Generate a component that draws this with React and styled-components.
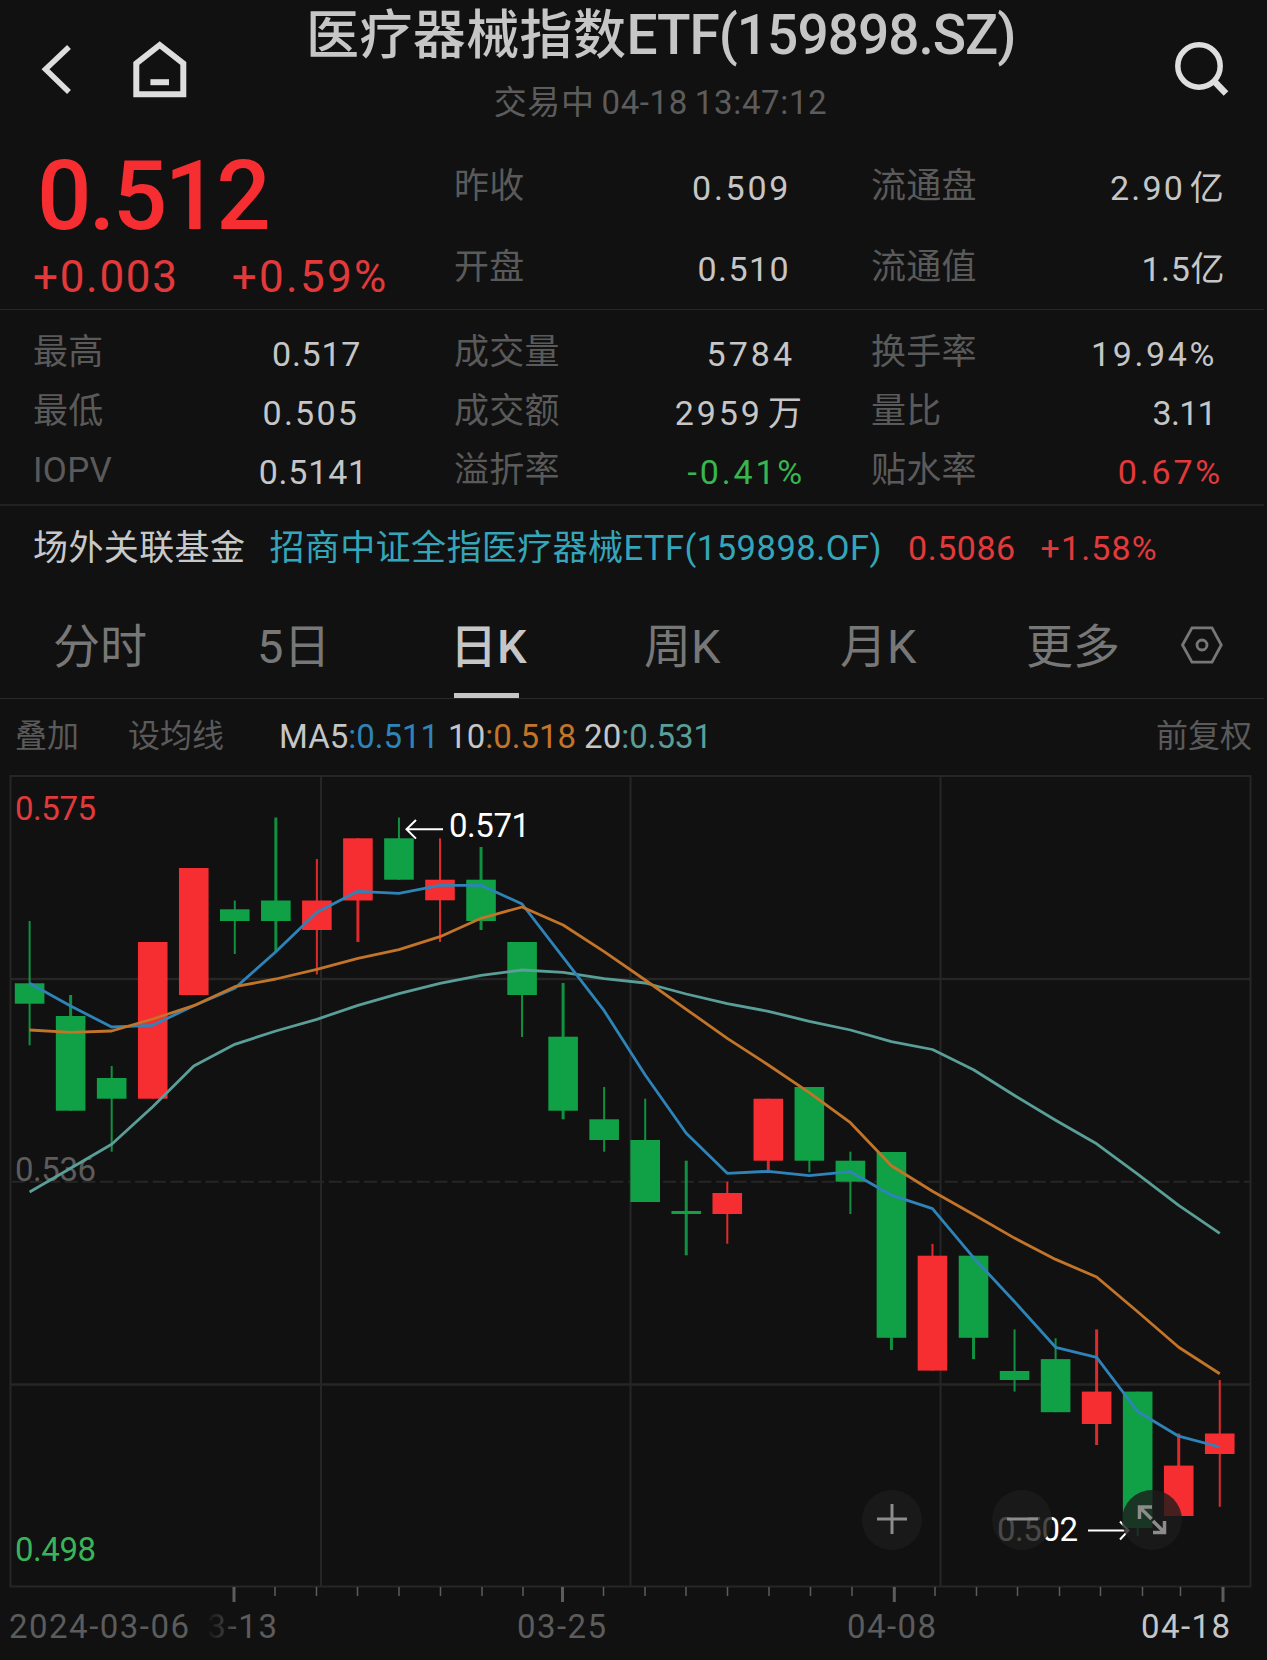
import styled, { createGlobalStyle, css } from 'styled-components';

const GlobalStyle = createGlobalStyle`
  * {
    box-sizing: border-box;
  }

  body {
    margin: 0;
    background: #111111;
  }
`;

const FONT = 'Roboto, "Noto Sans CJK SC", sans-serif';

const RED = '#f62d31';
const GREEN = '#10a046';

const Page = styled.main`
  width: 1267px;
  height: 1660px;
  overflow: hidden;
  padding-right: 3px;
  background: #111111;
  color: #c8c8c8;
  font-family: ${FONT};
  line-height: 1.2;
  white-space: nowrap;
`;

const Header = styled.header`
  display: grid;
  grid-template-columns: 306px 706px 1fr;
  height: 133px;
`;

const HeaderIcons = styled.div`
  display: flex;
  align-items: flex-start;
  gap: 59px;
  padding: 39px 0 0 39px;

  svg {
    display: block;
  }
`;

const SearchBox = styled.div`
  padding: 38px 0 0 160px;
`;

const TitleBox = styled.div`
  display: flex;
  flex-direction: column;
  align-items: center;
`;

const Title = styled.h1`
  align-self: flex-start;
  margin: 0;
  font-size: 53px;
  font-weight: 500;
  line-height: 71px;
  letter-spacing: 0.4px;
  color: #c6c6c6;

  span {
    font-size: 55px;
    letter-spacing: -1px;
  }
`;

const Status = styled.p`
  margin: 0 0 0 3px;
  font-size: 33px;
  line-height: 62px;
  color: #5c5c5c;
  letter-spacing: 0.65px;
  word-spacing: -2px;
`;

const Quote = styled.section`
  display: grid;
  grid-template-columns: 454px 417px 354px;
  height: 177px;
  border-bottom: 1px solid #262626;
`;

const Price = styled.p`
  margin: 0;
  padding-left: 37px;
  font-size: 96px;
  font-weight: 500;
  line-height: 126px;
  letter-spacing: -2.8px;
  color: ${RED};
`;

const Change = styled.p`
  display: flex;
  gap: 53px;
  margin: 0;
  padding-left: 33px;
  font-size: 44px;
  line-height: 37px;
  color: #e23a3b;
  letter-spacing: 1.7px;

  span:last-child {
    letter-spacing: 2.3px;
  }
`;

const QuoteColumn = styled.dl`
  margin: 0;
  padding-top: 13px;
`;

const Stats = styled.section`
  display: grid;
  grid-template-columns: 421px 417px 354px;
  height: 196px;
  padding: 13px 0 0 33px;
  border-bottom: 2px solid #222222;
`;

const StatColumn = styled.dl`
  margin: 0;
`;

const StatRow = styled.div`
  display: flex;
  justify-content: space-between;
  align-items: center;
  height: ${({ $height }) => $height}px;

  dt {
    font-size: 35px;
    letter-spacing: 0.3px;
    color: #5a5a5a;
  }
`;

const Value = styled.dd`
  margin: 0 ${({ $inset }) => $inset}px 0 0;
  padding-top: 3px;
  font-size: 34px;
  letter-spacing: ${({ $spacing }) => $spacing}px;
  word-spacing: -6px;
  color: ${({ $color }) => $color || '#c6c6c6'};
`;

const Fund = styled.section`
  display: flex;
  height: 85px;
  padding-left: 33px;
  font-size: 35px;
  line-height: 85px;
  letter-spacing: 0.4px;
`;

const FundName = styled.span`
  margin-left: 24px;
  color: #35a5ba;

  span {
    font-size: 34.5px;
    letter-spacing: 0.5px;
  }
`;

const FundFigure = styled.span`
  margin-left: ${({ $left }) => $left}px;
  color: #e23a3b;
  font-size: 34px;
  letter-spacing: ${({ $spacing }) => $spacing}px;
`;

const Tabs = styled.nav`
  display: grid;
  grid-template-columns: 204px 197px 190px 196px 186px 154px auto;
  height: 108px;
  padding-left: 53px;
  border-bottom: 1px solid #292929;

  svg {
    align-self: start;
    margin-top: 33px;
  }
`;

const Tab = styled.div`
  display: flex;
  flex-direction: column;
  justify-content: space-between;
  font-size: 47px;
  line-height: 111px;
  height: 107px;
  color: #777777;

  ${({ $active }) => $active && css`
    color: #c6c6c6;
    font-weight: 500;
    text-indent: -4px;

    &::after {
      content: '';
      flex: none;
      width: 65px;
      height: 5px;
      margin-top: -9px;
      background: #c6c6c6;
    }
  `}
`;

const Indicators = styled.div`
  display: flex;
  height: 71px;
  padding: 4px 12px 0 15px;
  font-size: 33px;
  line-height: 67px;
  color: #c6c6c6;
`;

const Tool = styled.span`
  margin-right: ${({ $right }) => $right || 0}px;
  font-size: 32px;
  color: #5a5a5a;
`;

const Average = styled.span`
  margin-right: ${({ $right }) => $right || 0}px;

  em {
    font-style: normal;
    color: ${({ $color }) => $color};
  }
`;

const Spacer = styled.div`
  flex: 1;
`;

const ChartBox = styled.section`
  position: relative;
  width: 1267px;
  height: 890px;

  > svg {
    display: block;
  }
`;

const RoundButton = styled.button`
  position: absolute;
  top: 720px;
  left: ${({ $left }) => $left}px;
  width: 60px;
  height: 60px;
  padding: 0;
  border: 0;
  border-radius: 50%;
  background: rgba(28, 28, 28, 0.8);

  svg {
    display: block;
  }
`;

const quoteColumns = [
  [
    { label: '昨收', value: '0.509', inset: 80, spacing: 2.7 },
    { label: '开盘', value: '0.510', inset: 81, spacing: 1.4 },
  ],
  [
    { label: '流通盘', value: '2.90 亿', inset: -1, spacing: 2.2 },
    { label: '流通值', value: '1.5亿', inset: 0, spacing: 0.6 },
  ],
];

const statColumns = [
  [
    { label: '最高', value: '0.517', inset: 93, spacing: 0.7 },
    { label: '最低', value: '0.505', inset: 95, spacing: 2.2 },
    { label: 'IOPV', value: '0.5141', inset: 86, spacing: 0.8 },
  ],
  [
    { label: '成交量', value: '5784', inset: 76, spacing: 3 },
    { label: '成交额', value: '2959 万', inset: 66, spacing: 2.9 },
    { label: '溢折率', value: '-0.41%', inset: 66, spacing: 2.8, color: '#39b54f' },
  ],
  [
    { label: '换手率', value: '19.94%', inset: 8, spacing: 2.6 },
    { label: '量比', value: '3.11', inset: 9, spacing: -0.7 },
    { label: '贴水率', value: '0.67%', inset: 2, spacing: 2.8, color: '#e23a3b' },
  ],
];

// [color, high, body top, body bottom, low, wick width]
const candles = [
  [GREEN, 151, 213.3, 233.7, 275.3, 2],
  [GREEN, 225, 246, 340.7, 340.7, 3],
  [GREEN, 296, 308, 328.7, 381.7, 2],
  [RED, 172, 172, 328.7, 328.7, 2],
  [RED, 98, 98, 225, 225, 2],
  [GREEN, 130.5, 139.3, 151, 184, 2],
  [GREEN, 47.5, 130.5, 151, 182, 3],
  [RED, 89, 130.5, 160, 204.5, 2],
  [RED, 68.3, 68.3, 130.5, 172, 3],
  [GREEN, 47.5, 68.3, 109.7, 109.7, 2],
  [RED, 68.3, 109.7, 130.3, 172, 2],
  [GREEN, 77, 109.7, 151, 160, 3],
  [GREEN, 172, 172, 225, 267, 2],
  [GREEN, 213, 266.7, 340.7, 349.3, 3],
  [GREEN, 317, 349.3, 370, 381.7, 2],
  [GREEN, 328.7, 370, 432, 432, 2],
  [GREEN, 390.7, 441, 444, 485.3, 3],
  [RED, 411.7, 423, 444, 473.7, 2],
  [RED, 328.7, 328.7, 390.7, 400, 3],
  [GREEN, 317, 317, 390.7, 402.3, 2],
  [GREEN, 381.7, 390.7, 411.7, 444, 2],
  [GREEN, 382, 382, 567.8, 580, 3],
  [RED, 473.9, 485.7, 600.6, 600.6, 2],
  [GREEN, 485.7, 485.7, 567.8, 589.1, 3],
  [GREEN, 559.4, 601, 610, 621.6, 2],
  [GREEN, 568.2, 589.1, 642.2, 642.2, 2],
  [RED, 559.4, 621.6, 654, 675, 3],
  [GREEN, 621.6, 621.6, 758, 766, 2],
  [RED, 663.5, 695.6, 746, 746, 3],
  [RED, 610, 663.5, 684, 736.8, 2],
];

const averages = [
  {
    color: '#5a9e98',
    points: [
      422, 398.3, 374.3, 336.7, 296, 274.3, 261, 249.3, 235.3, 223.7,
      213.3, 205.3, 200, 202.3, 208.7, 213, 224, 233.7, 241.3, 251.3,
      260, 271.6, 279.5, 299.8, 325.5, 350.2, 373.8, 404.2, 435.3, 463.4,
    ],
  },
  {
    color: '#2e84b8',
    points: [
      213.3, 236, 257, 255.3, 235.7, 218.3, 181.7, 142.3, 121.3, 123.3,
      115.3, 115.3, 134, 187.3, 240.7, 305, 363.3, 403.3, 401.3, 405.7,
      401.7, 425.2, 438.7, 487.7, 531.7, 577.3, 587.4, 641.5, 666.2, 677,
    ],
  },
  {
    color: '#c27429',
    points: [
      260, 262.3, 261, 249, 235.7, 216.7, 209, 199.3, 188.3, 179.7,
      166.7, 148.3, 137, 155, 181.7, 210, 239.3, 268.3, 295, 322.7,
      352.7, 395.8, 421.2, 444.5, 468.1, 489.4, 507, 541.8, 577.3, 603.7,
    ],
  },
];

const majorTicks = [234, 562.5, 894.3, 1223];
const minorTicks = [
  275, 316.5, 357.5, 399, 440.5, 482, 523, 603.5, 645, 686, 727.5,
  769, 810.5, 852, 935, 976.5, 1017.5, 1059.5, 1100.5, 1142.5, 1180.5,
];

const centerOf = (index) => 29.6 + index * 41.04;

function StatList({ rows, height }) {
  return rows.map(({ label, value, inset, spacing, color }) => (
    <StatRow key={label} $height={height}>
      <dt>{label}</dt>
      <Value $inset={inset} $spacing={spacing} $color={color}>{value}</Value>
    </StatRow>
  ));
}

function Label({ x, y, width, fill, children }) {
  return (
    <text x={x} y={y} fill={fill} fontSize="33" textLength={width}>
      {children}
    </text>
  );
}

function Chart() {
  return (
    <ChartBox>
      <svg width="1267" height="890" fontFamily={FONT}>
        <defs>
          <linearGradient id="fade" gradientUnits="userSpaceOnUse" x1="206" y1="0" x2="240" y2="0">
            <stop offset="0" stopColor="#111111" />
            <stop offset="1" stopColor="#5c5c5c" />
          </linearGradient>
        </defs>

        <g stroke="#262626" strokeWidth="2" fill="none">
          <rect x="10.5" y="6" width="1240" height="810.5" />
          <path d="M321 6V816M630.5 6V816M940.5 6V816" />
          <path d="M10 209H1250M10 614.5H1250" strokeWidth="2.5" />
          <path d="M12 411.7H1250" strokeDasharray="13 4.6" />
        </g>

        <g stroke="#5c5c5c">
          {minorTicks.map((x) => (
            <path key={x} d={`M${x} 817v9`} strokeWidth="1.5" />
          ))}
          {majorTicks.map((x) => (
            <path key={x} d={`M${x} 817v15`} strokeWidth="3" />
          ))}
        </g>

        <Label x="15" y="411" width="81" fill="#5c5c5c">0.536</Label>

        {candles.map(([color, high, top, bottom, low, wick], index) => (
          <g key={centerOf(index)} fill={color}>
            <rect x={centerOf(index) - wick / 2} y={high} width={wick} height={low - high} opacity="0.9" />
            <rect x={centerOf(index) - 14.8} y={top} width="29.6" height={bottom - top} />
          </g>
        ))}

        {averages.map(({ color, points }) => (
          <polyline
            key={color}
            points={points.map((y, index) => `${centerOf(index)},${y}`).join(' ')}
            fill="none"
            stroke={color}
            strokeWidth="2.8"
            strokeLinejoin="round"
          />
        ))}

        <Label x="15" y="50" width="81" fill="#e23a3b">0.575</Label>
        <Label x="15" y="790.5" width="81" fill="#39b559">0.498</Label>
        <Label x="449" y="66.5" width="81" fill="#ffffff">0.571</Label>
        <Label x="997" y="771" width="81" fill="#ffffff">0.502</Label>
        <g stroke="#ffffff" strokeWidth="2" fill="none">
          <path d="M443 59.3H407M416 50l-9.5 9.3L416 68.6" />
          <path d="M1088 760.5H1128M1120 751.5l8.5 9L1120 769.5" />
        </g>

        <Label x="9" y="868" width="180" fill="#5c5c5c">2024-03-06</Label>
        <Label x="187" y="868" width="90" fill="url(#fade)">03-13</Label>
        <Label x="517" y="868" width="89" fill="#5c5c5c">03-25</Label>
        <Label x="847" y="868" width="89" fill="#5c5c5c">04-08</Label>
        <Label x="1141" y="868" width="89" fill="#c6c6c6">04-18</Label>
      </svg>

      <RoundButton $left={862}>
        <svg width="60" height="60" stroke="#8c8c8c" strokeWidth="3">
          <path d="M15 29H45M30 14V44" />
        </svg>
      </RoundButton>
      <RoundButton $left={992}>
        <svg width="60" height="60" stroke="#8c8c8c" strokeWidth="3">
          <path d="M15 29H46" />
        </svg>
      </RoundButton>
      <RoundButton $left={1122}>
        <svg width="60" height="60" stroke="#8c8c8c" strokeWidth="3.5" fill="none">
          <path d="M17.500 29V17H30M18 17.500L29.500 29" />
          <path d="M42.500 31V42.500H31M42 42L31 31" />
        </svg>
      </RoundButton>
    </ChartBox>
  );
}

export default function App() {
  return (
    <Page>
      <GlobalStyle />
      <Header>
        <HeaderIcons>
          <svg width="34" height="60" fill="none" stroke="#dedede" strokeWidth="5.5">
            <path d="M30 8L6.500 30.300L30 53" />
          </svg>
          <svg width="56" height="62" fill="none" stroke="#dedede" strokeWidth="6">
            <path d="M27.700 6L4.300 24.500V55.300H51.300V24.500Z" />
            <path d="M18.400 43.200H37" />
          </svg>
        </HeaderIcons>
        <TitleBox>
          <Title>
            医疗器械指数
            <span>ETF(159898.SZ)</span>
          </Title>
          <Status>交易中 04-18 13:47:12</Status>
        </TitleBox>
        <SearchBox>
          <svg width="60" height="62" fill="none" stroke="#dedede" strokeWidth="5.5">
            <circle cx="27" cy="28" r="21.200" />
            <path d="M41 42L54 55.500" strokeWidth="6.500" />
          </svg>
        </SearchBox>
      </Header>

      <Quote>
        <div>
          <Price>0.512</Price>
          <Change>
            <span>+0.003</span>
            <span>+0.59%</span>
          </Change>
        </div>
        {quoteColumns.map((rows) => (
          <QuoteColumn key={rows[0].label}>
            <StatList rows={rows} height={81.5} />
          </QuoteColumn>
        ))}
      </Quote>

      <Stats>
        {statColumns.map((rows) => (
          <StatColumn key={rows[0].label}>
            <StatList rows={rows} height={59} />
          </StatColumn>
        ))}
      </Stats>

      <Fund>
        <span>场外关联基金</span>
        <FundName>
          招商中证全指医疗器械
          <span>ETF(159898.OF)</span>
        </FundName>
        <FundFigure $left={26} $spacing={0.5}>0.5086</FundFigure>
        <FundFigure $left={25} $spacing={1.1}>+1.58%</FundFigure>
      </Fund>

      <Tabs>
        <Tab>分时</Tab>
        <Tab>5日</Tab>
        <Tab $active>日K</Tab>
        <Tab>周K</Tab>
        <Tab>月K</Tab>
        <Tab>更多</Tab>
        <svg width="44" height="42" fill="none" stroke="#777777" strokeWidth="2.8">
          <path d="M2.500 21L12 3.800H32L41.300 21L32 38.200H12Z" />
          <circle cx="22" cy="21" r="5" />
        </svg>
      </Tabs>

      <Indicators>
        <Tool $right={49}>叠加</Tool>
        <Tool $right={55}>设均线</Tool>
        <Average $right={9} $color="#2e84b8">
          MA5
          <em>:0.511</em>
        </Average>
        <Average $right={8} $color="#c27429">
          10
          <em>:0.518</em>
        </Average>
        <Average $color="#5a9e98">
          20
          <em>:0.531</em>
        </Average>
        <Spacer />
        <Tool>前复权</Tool>
      </Indicators>

      <Chart />
    </Page>
  );
}
